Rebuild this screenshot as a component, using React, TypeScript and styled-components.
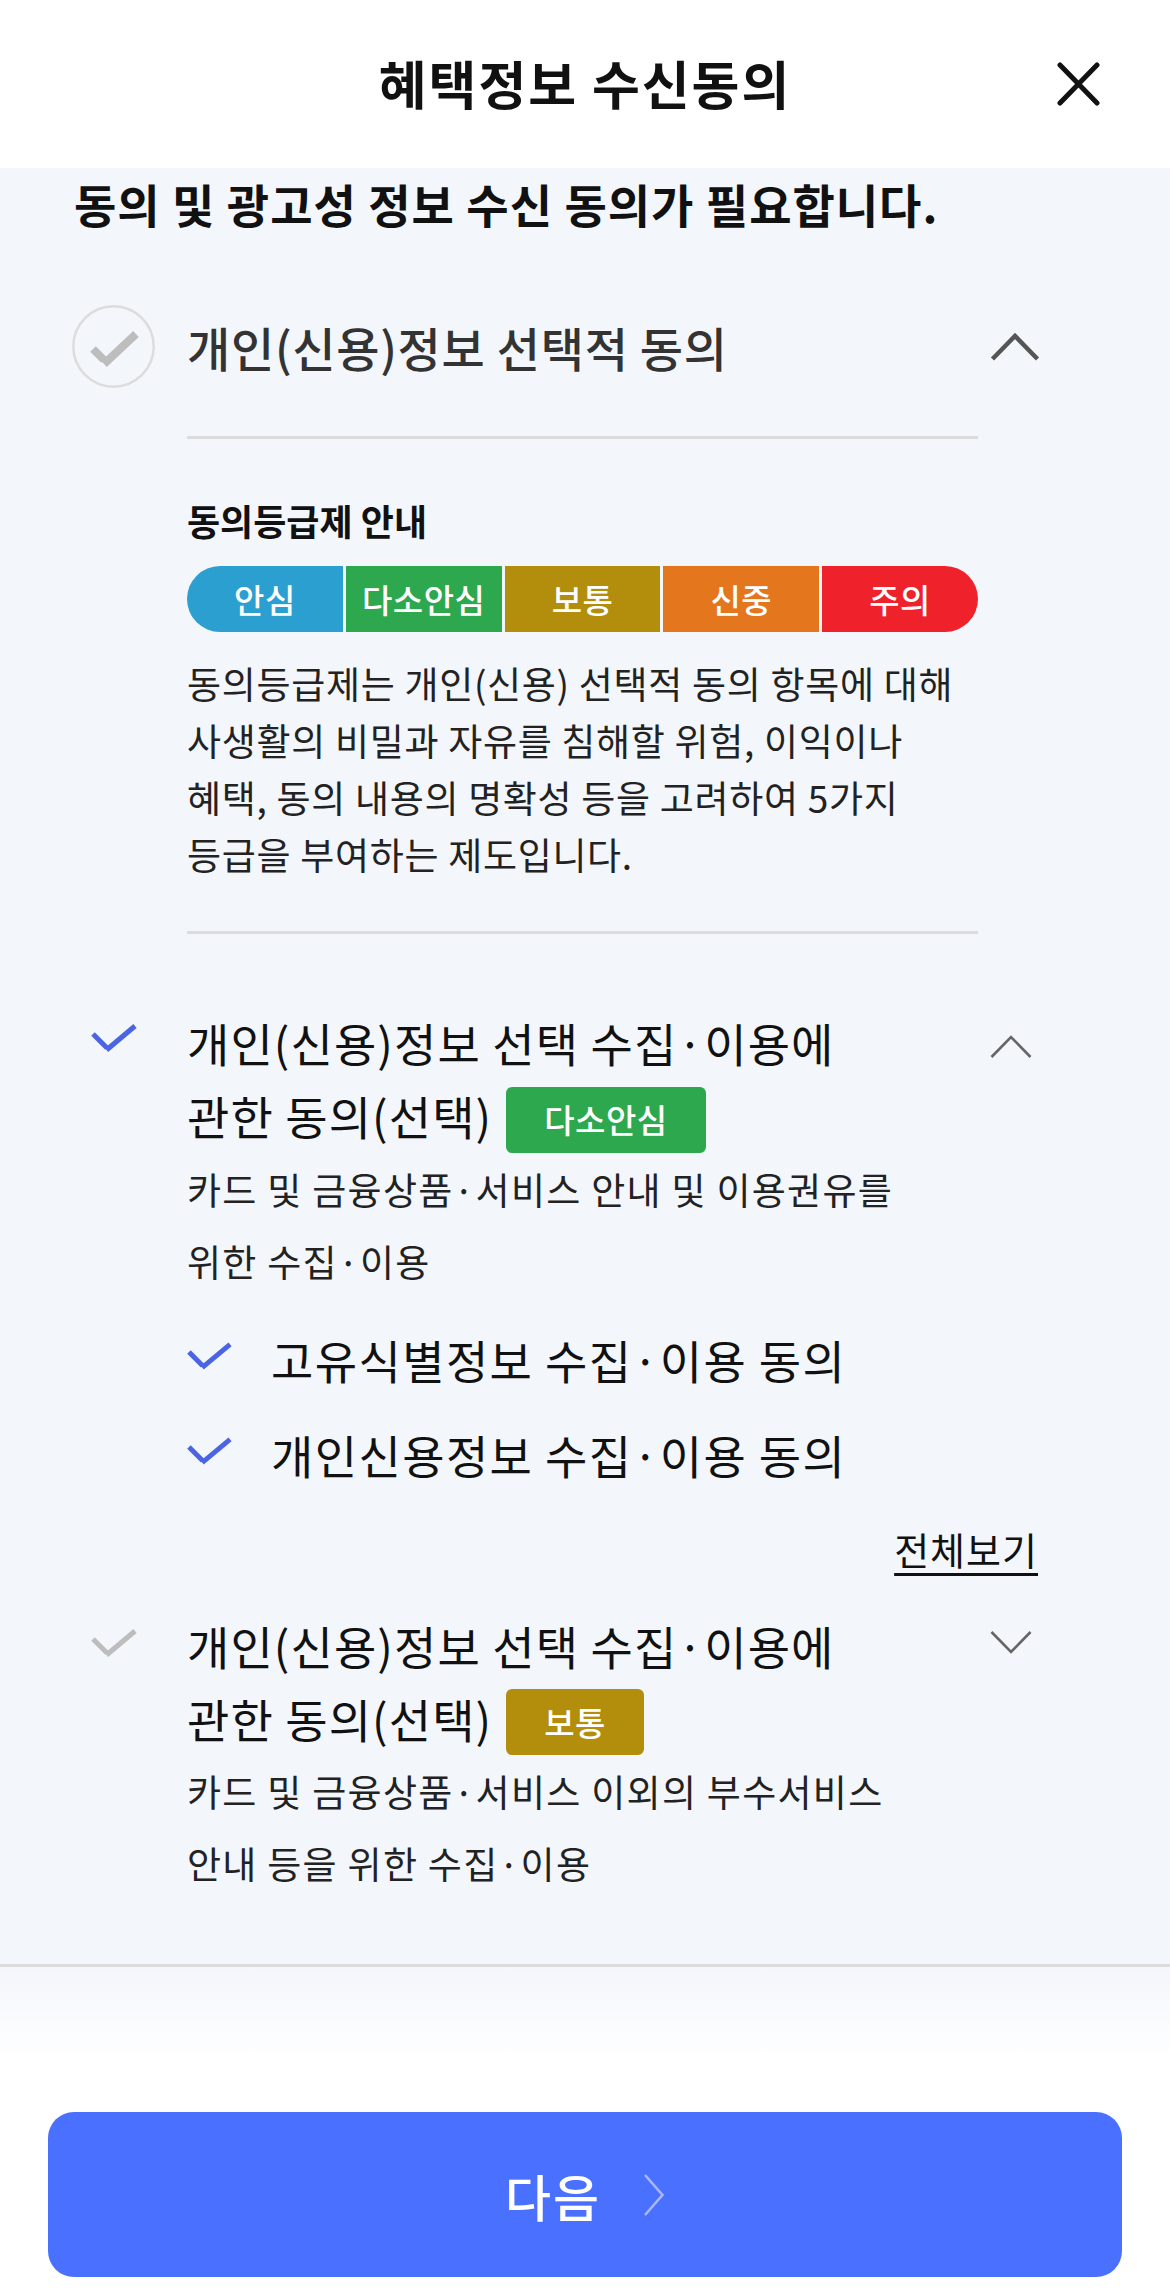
import React from 'react';
import styled, { createGlobalStyle } from 'styled-components';

const GlobalStyle = createGlobalStyle`
  html, body { margin: 0; padding: 0; background: #ffffff; }
  body { font-family: "Noto Sans CJK KR", "Noto Sans", sans-serif; color: #111; }
  * { box-sizing: border-box; }
`;

const Page = styled.div`
  width: 1170px;
  height: 2289px;
  display: flex;
  flex-direction: column;
  overflow: hidden;
  background: #ffffff;
`;

const Header = styled.header`
  flex: none;
  height: 168px;
  display: grid;
  grid-template-columns: 1fr auto 1fr;
  align-items: center;
  background: #ffffff;
`;

const HeaderTitle = styled.h1`
  grid-column: 2;
  margin: 0;
  font-size: 52px;
  letter-spacing: 2px;
  font-weight: 700;
  line-height: 1;
  color: #111;
  padding-bottom: 2px;
`;

const CloseButton = styled.button`
  grid-column: 3;
  justify-self: end;
  margin-right: 69px;
  width: 45px;
  height: 44px;
  padding: 0;
  border: 0;
  background: none;
  display: flex;
  align-items: center;
  justify-content: center;
`;

const Content = styled.main`
  flex: 1;
  overflow: hidden;
  background: #f3f6fb;
  padding: 0 129px 0 72px;
`;

const Lead = styled.p`
  margin: 0 0 0 2px;
  font-size: 46px;
  letter-spacing: 1px;
  font-weight: 700;
  line-height: 70px;
  color: #111;
  white-space: nowrap;
`;

const Row = styled.div<{ $top: number; $center?: boolean }>`
  display: grid;
  grid-template-columns: 83px 1fr 63px;
  align-items: ${(p) => (p.$center ? 'center' : 'start')};
  margin-top: ${(p) => p.$top}px;
`;

const IconCell = styled.div<{ $top?: number }>`
  display: flex;
  justify-content: center;
  margin-top: ${(p) => p.$top ?? 0}px;
`;

const Body = styled.div`
  padding-left: 32px;
  min-width: 0;
`;

const ChevronCell = styled.div<{ $top?: number }>`
  display: flex;
  padding-left: 12px;
  margin-top: ${(p) => p.$top ?? 0}px;
`;

const GroupTitle = styled.div`
  font-size: 47px;
  letter-spacing: 0.7px;
  font-weight: 500;
  color: #333;
  line-height: 83px;
  white-space: nowrap;
`;

const Panel = styled.div`
  margin: 48px 63px 0 115px;
`;

const Divider = styled.hr`
  margin: 0;
  border: 0;
  height: 3px;
  background: #dcdcdc;
`;

const PanelHeading = styled.h3`
  margin: 56px 0 0;
  font-size: 36px;
  font-weight: 700;
  line-height: 50px;
  color: #111;
`;

const GradeBar = styled.div`
  margin-top: 21px;
  display: flex;
  gap: 3px;
  height: 66px;
`;

const Grade = styled.div<{ $color: string }>`
  flex: 1;
  display: flex;
  align-items: center;
  justify-content: center;
  background: ${(p) => p.$color};
  color: #fff;
  font-size: 33px;
  letter-spacing: 0.5px;
  font-weight: 500;
  &:first-child { border-radius: 33px 0 0 33px; }
  &:last-child { border-radius: 0 33px 33px 0; }
`;

const PanelText = styled.p`
  margin: 23px 0 48px;
  font-size: 37px;
  letter-spacing: 0.7px;
  line-height: 57px;
  color: #222;
  white-space: nowrap;
`;

const ItemTitle = styled.div`
  font-size: 46px;
  letter-spacing: 1.1px;
  font-weight: 400;
  line-height: 73px;
  color: #111;
  white-space: nowrap;
`;

const Badge = styled.span<{ $color: string }>`
  display: inline-flex;
  align-items: center;
  vertical-align: middle;
  height: 66px;
  padding: 0 38px;
  margin-left: 14px;
  margin-top: -6px;
  border-radius: 6px;
  background: ${(p) => p.$color};
  color: #fff;
  font-size: 33px;
  letter-spacing: 0.5px;
  font-weight: 500;
  line-height: 1;
`;

const ItemDesc = styled.p`
  margin: 0;
  font-size: 37px;
  letter-spacing: 1.3px;
  line-height: 72px;
  color: #222;
  white-space: nowrap;
`;

const SubList = styled.ul`
  list-style: none;
  margin: 15px 0 0;
  padding: 0;
`;

const SubItem = styled.li`
  display: grid;
  grid-template-columns: 45px 1fr;
  column-gap: 39px;
  align-items: center;
  height: 95px;
  font-size: 46px;
  letter-spacing: 1.4px;
  color: #111;
  white-space: nowrap;
`;

const SubCheck = styled.span`
  display: flex;
  margin-top: -6px;
`;

const MoreRow = styled.div`
  display: flex;
  justify-content: flex-end;
  margin-top: 22px;
  padding-right: 3px;
`;

const MoreLink = styled.a`
  font-size: 38px;
  letter-spacing: 1px;
  line-height: 50px;
  color: #111;
  text-decoration: underline;
  text-underline-offset: 8px;
  text-decoration-thickness: 3px;
`;

const Footer = styled.footer`
  flex: none;
  border-top: 3px solid #dcdcdc;
  background: linear-gradient(to bottom, #f3f6fb 0px, #ffffff 92px);
  padding: 145px 48px 12px;
`;

const NextButton = styled.button`
  width: 100%;
  height: 165px;
  border: 0;
  border-radius: 26px;
  background: #4a70ff;
  color: #fff;
  font-family: "Noto Sans CJK KR", "Noto Sans", sans-serif;
  font-size: 50px;
  letter-spacing: 2px;
  font-weight: 500;
  display: flex;
  align-items: center;
  justify-content: center;
  gap: 42px;
`;

const CloseIcon = () => (
  <svg width="45" height="44" viewBox="0 0 45 44">
    <path d="M4 3 L41 41 M41 3 L4 41" stroke="#111" strokeWidth="5" strokeLinecap="round" fill="none" />
  </svg>
);

const CircleCheck = () => (
  <svg width="83" height="83" viewBox="0 0 83 83">
    <circle cx="41.5" cy="41.5" r="40.2" fill="none" stroke="#dcdcdc" strokeWidth="2.5" />
    <path d="M21 44 L32 55" stroke="#bdbdbd" strokeWidth="8" fill="none" />
    <path d="M32 59 L64 29" stroke="#bdbdbd" strokeWidth="8" fill="none" />
  </svg>
);

const Check = ({ color }: { color: string }) => (
  <svg width="46" height="30" viewBox="0 0 46 30">
    <path d="M2 11 L16 25" stroke={color} strokeWidth="5" fill="none" />
    <path d="M15.5 27 L44 3" stroke={color} strokeWidth="5" fill="none" />
  </svg>
);

const ChevronBold = () => (
  <svg width="50" height="28" viewBox="0 0 50 28">
    <path d="M2.5 26 L25 3 L47.5 26" stroke="#555" strokeWidth="4.5" fill="none" />
  </svg>
);

const ChevronThin = ({ down }: { down?: boolean }) => (
  <svg width="42" height="24" viewBox="0 0 42 24">
    <path
      d={down ? 'M1.5 2 L21 22 L40.5 2' : 'M1.5 22 L21 2 L40.5 22'}
      stroke="#666"
      strokeWidth="2.6"
      fill="none"
    />
  </svg>
);

const ButtonChevron = () => (
  <svg width="22" height="42" viewBox="0 0 22 42">
    <path d="M2 1 L19.5 21 L2 41" stroke="#a9b8ff" strokeWidth="2.5" fill="none" />
  </svg>
);

const grades = [
  { label: '안심', color: '#2b9fcf' },
  { label: '다소안심', color: '#2ea84f' },
  { label: '보통', color: '#b38e0c' },
  { label: '신중', color: '#e4761e' },
  { label: '주의', color: '#ef222b' },
];

export default function App() {
  return (
    <>
      <GlobalStyle />
      <Page>
        <Header>
          <HeaderTitle>혜택정보 수신동의</HeaderTitle>
          <CloseButton aria-label="닫기">
            <CloseIcon />
          </CloseButton>
        </Header>

        <Content>
          <Lead>동의 및 광고성 정보 수신 동의가 필요합니다.</Lead>

          <Row $top={67} $center>
            <IconCell>
              <CircleCheck />
            </IconCell>
            <Body>
              <GroupTitle>개인(신용)정보 선택적 동의</GroupTitle>
            </Body>
            <ChevronCell>
              <ChevronBold />
            </ChevronCell>
          </Row>

          <Panel>
            <Divider />
            <PanelHeading>동의등급제 안내</PanelHeading>
            <GradeBar>
              {grades.map((g) => (
                <Grade key={g.label} $color={g.color}>
                  {g.label}
                </Grade>
              ))}
            </GradeBar>
            <PanelText>
              동의등급제는 개인(신용) 선택적 동의 항목에 대해
              <br />
              사생활의 비밀과 자유를 침해할 위험, 이익이나
              <br />
              혜택, 동의 내용의 명확성 등을 고려하여 5가지
              <br />
              등급을 부여하는 제도입니다.
            </PanelText>
            <Divider />
          </Panel>

          <Row $top={72}>
            <IconCell $top={17}>
              <Check color="#4b64e3" />
            </IconCell>
            <Body>
              <ItemTitle>
                개인(신용)정보 선택 수집·이용에
                <br />
                관한 동의(선택)
                <Badge $color="#2ea84f">다소안심</Badge>
              </ItemTitle>
              <ItemDesc>
                카드 및 금융상품·서비스 안내 및 이용권유를
                <br />
                위한 수집·이용
              </ItemDesc>
              <SubList>
                <SubItem>
                  <SubCheck>
                    <Check color="#4b64e3" />
                  </SubCheck>
                  <span>고유식별정보 수집·이용 동의</span>
                </SubItem>
                <SubItem>
                  <SubCheck>
                    <Check color="#4b64e3" />
                  </SubCheck>
                  <span>개인신용정보 수집·이용 동의</span>
                </SubItem>
              </SubList>
            </Body>
            <ChevronCell $top={29}>
              <ChevronThin />
            </ChevronCell>
          </Row>

          <MoreRow>
            <MoreLink>전체보기</MoreLink>
          </MoreRow>

          <Row $top={35}>
            <IconCell $top={19}>
              <Check color="#bdbdbd" />
            </IconCell>
            <Body>
              <ItemTitle>
                개인(신용)정보 선택 수집·이용에
                <br />
                관한 동의(선택)
                <Badge $color="#b38e0c">보통</Badge>
              </ItemTitle>
              <ItemDesc>
                카드 및 금융상품·서비스 이외의 부수서비스
                <br />
                안내 등을 위한 수집·이용
              </ItemDesc>
            </Body>
            <ChevronCell $top={21}>
              <ChevronThin down />
            </ChevronCell>
          </Row>
        </Content>

        <Footer>
          <NextButton>
            <span>다음</span>
            <ButtonChevron />
          </NextButton>
        </Footer>
      </Page>
    </>
  );
}
